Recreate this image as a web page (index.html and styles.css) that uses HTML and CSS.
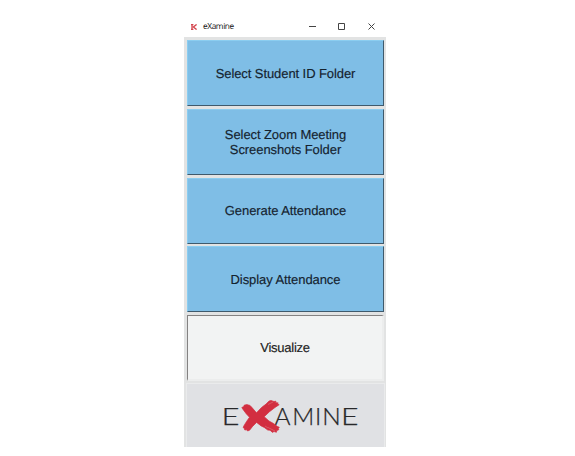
FILE: index.html
```html
<!DOCTYPE html>
<html lang="en">
<head>
<meta charset="utf-8">
<title>eXamine</title>
<link rel="stylesheet" href="styles.css">
</head>
<body>
<main class="window">
  <header class="titlebar">
    <svg class="app-icon" width="6" height="6" viewBox="0 0 6 6"><path d="M1 0v6M0 .5h2.4M0 5.5h2.4M5.6.4 2.4 3l3.2 2.6"/></svg>
    <span class="title">eXamine</span>
    <svg class="controls" width="70" height="9" viewBox="0 0 70 9"><path d="M1 4.5h7M30.5 1.5h6v6h-6zM60.5 1.5l6 6M66.5 1.5l-6 6"/></svg>
  </header>
  <div class="panel">
    <button class="action">Select Student ID Folder</button>
    <button class="action">Select Zoom Meeting<br>Screenshots Folder</button>
    <button class="action">Generate Attendance</button>
    <button class="action">Display Attendance</button>
    <button class="action pressed">Visualize</button>
    <div class="brand">
      <svg width="197" height="63" viewBox="187 384 197 63">
        <g class="letters">
          <text x="221.5" y="424.7" textLength="18" lengthAdjust="spacingAndGlyphs">E</text>
          <text x="274.5" y="424.7" textLength="16" lengthAdjust="spacingAndGlyphs">A</text>
          <text x="292.2" y="424.7" textLength="22" lengthAdjust="spacingAndGlyphs">M</text>
          <text x="315" y="424.7">I</text>
          <text x="322.3" y="424.7" textLength="18.5" lengthAdjust="spacingAndGlyphs">N</text>
          <text x="341" y="424.7" textLength="17.5" lengthAdjust="spacingAndGlyphs">E</text>
        </g>
        <path class="cross" d="M241.8 407.5l2-1 .3-1.3 2.7-.6 3.2.8 2 2.2 4.5 5.2 5-5.3 4.5-3.4 3-3 2-.6 3 1 2-.3-.6 1.4 2.8.3-.8 1 1.8.8-4.2 2.8-5.5 4.2-5.3 5 4.8 4.3 4.5 2.5 4 3 1.8.8-1 1.4.5 1-2 .9-.4 1.7-2.4-.8-1.5.9-2.5-2.2-2.2-.1-3.5-2.6-3.2-1.6-4.5-3.5-4 4-3 3.8-2 .8-1-1.2-1.8.2-.5-1.6-1.2-1 1.3-2.5 2.3-3.6 2.8-4-3.3-3.6-3-4z"/>
        <path class="scratches" d="M268 404.5l5-2.5M268 427.5l7 3.5M265 426l3 2"/>
      </svg>
    </div>
  </div>
</main>
</body>
</html>
```
FILE: styles.css
```css
body {
  margin: 0;
  background: #fff;
  font-family: "Liberation Sans", Arial, sans-serif;
}
.window {
  width: 202px;
  margin-left: 184px;
  padding-top: 16px;
}
.titlebar {
  display: flex;
  align-items: center;
  box-sizing: border-box;
  height: 21px;
  padding-left: 7px;
}
.app-icon {
  margin-top: 1px;
  fill: none;
  stroke: #d4454e;
  stroke-width: 1.3;
}
.title {
  margin-left: 6px;
  font: 8.3px "Open Sans", sans-serif;
  letter-spacing: -0.4px;
  text-rendering: geometricPrecision;
  color: #111;
}
.controls {
  margin-left: auto;
  margin-right: 8px;
  fill: none;
  stroke: #444;
  stroke-width: 1;
}
.panel {
  display: grid;
  grid-template-rows: repeat(5, 66px) 63px;
  row-gap: 2.75px;
  box-sizing: border-box;
  height: 410px;
  padding: 3px 2px 0 3px;
  background: #e2e3e3;
  overflow: hidden;
}
.action {
  box-sizing: border-box;
  width: 197px;
  padding: 0;
  border: solid;
  border-width: 1px 1.5px 1.5px 1px;
  border-color: #8bcdf0 #3f5a6c #3f5a6c #8bcdf0;
  background: #7fbee6;
  color: #14222e;
  font: 13px/15px "Liberation Sans", Arial, sans-serif;
  letter-spacing: -0.08px;
  text-rendering: geometricPrecision;
  -webkit-text-stroke: 0.15px;
}
.pressed {
  border-width: 1px 2px 2px 1px;
  border-color: #848282 #eceded #eceded #848282;
  background: #f2f3f3;
  color: #222;
  letter-spacing: -0.25px;
}
.brand {
  box-sizing: border-box;
  height: 63px;
  background: #e0e1e4;
  box-shadow: 0 0 0 1px #eaebec;
}
.brand svg {
  display: block;
}
.letters {
  font: 300 24px Lato, sans-serif;
  fill: #28282a;
  stroke: #28282a;
  stroke-width: 0.25;
}
.cross {
  fill: #d22e40;
  stroke: #d22e40;
  stroke-width: 0.7;
}
.scratches {
  fill: none;
  stroke: #dc7580;
  stroke-width: 0.6;
}
```
